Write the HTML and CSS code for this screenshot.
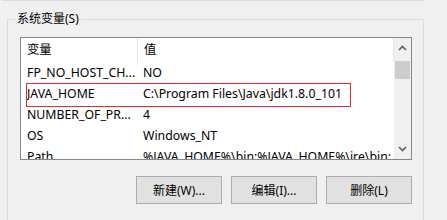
FILE: index.html
```html
<!DOCTYPE html>
<html lang="zh-CN">
<head>
    <meta charset="UTF-8">
    <title>系统变量</title>
    <link rel="stylesheet" href="styles.css">
</head>
<body>
    <div class="top-rule"></div>
    <div class="group">
        <span class="group-title">系统变量(S)</span>
        <div class="list">
            <div class="list-body">
                <div class="list-head">
                    <div class="col-name">变量</div>
                    <div class="col-value">值</div>
                </div>
                <div class="row">
                    <div class="col-name">FP_NO_HOST_CH...</div>
                    <div class="col-value">NO</div>
                </div>
                <div class="row">
                    <div class="col-name">JAVA_HOME</div>
                    <div class="col-value">C:\Program Files\Java\jdk1.8.0_101</div>
                </div>
                <div class="row">
                    <div class="col-name">NUMBER_OF_PR...</div>
                    <div class="col-value">4</div>
                </div>
                <div class="row">
                    <div class="col-name">OS</div>
                    <div class="col-value">Windows_NT</div>
                </div>
                <div class="row">
                    <div class="col-name">Path</div>
                    <div class="col-value">%JAVA_HOME%\bin;%JAVA_HOME%\jre\bin;</div>
                </div>
                <div class="highlight"></div>
            </div>
            <div class="scrollbar">
                <svg class="arrow" width="9" height="6" viewBox="0 0 9 6">
                    <path d="M1 5 L4.5 1.5 L8 5" fill="none" stroke="#606060" stroke-width="1.6"/>
                </svg>
                <div class="track">
                    <div class="thumb"></div>
                </div>
                <svg class="arrow" width="9" height="6" viewBox="0 0 9 6">
                    <path d="M1 1 L4.5 4.5 L8 1" fill="none" stroke="#606060" stroke-width="1.6"/>
                </svg>
            </div>
        </div>
        <div class="buttons">
            <button class="btn">新建(W)...</button>
            <button class="btn">编辑(I)...</button>
            <button class="btn">删除(L)</button>
        </div>
    </div>
</body>
</html>
```

FILE: styles.css
```css
body {
    margin: 0;
    width: 447px;
    height: 220px;
    overflow: hidden;
    background-color: #f0f0f0;
    font-family: "Noto Sans", "Noto Sans CJK SC", sans-serif;
    font-size: 12px;
    color: #000;
}
.top-rule {
    margin-left: 2px;
    width: 422px;
    height: 1px;
    background-color: #dcdcdc;
}
.group {
    position: relative;
    margin: 18px 0 0 7px;
    width: 415px;
    height: 200px;
    border: 1px solid #dcdcdc;
    border-bottom: none;
}
.group-title {
    position: absolute;
    left: 7px;
    top: -10px;
    padding: 0 2px;
    line-height: 18px;
    background-color: #f0f0f0;
}
.list {
    display: flex;
    margin: 17px 0 0 12px;
    width: 390px;
    height: 121px;
    border: 1px solid #828790;
    background-color: #fff;
    overflow: hidden;
    font-size: 12.3px;
}
.list-body {
    position: relative;
    flex: 1;
    overflow: hidden;
}
.list-head {
    display: flex;
    height: 24px;
    line-height: 24px;
    border-right: 1px solid #e5e5e5;
}
.list-head .col-name {
    border-right: 1px solid #e5e5e5;
}
.row {
    display: flex;
    height: 21px;
    line-height: 21px;
    white-space: nowrap;
}
.col-name {
    width: 110px;
    padding-left: 6px;
    flex-shrink: 0;
}
.col-value {
    padding-left: 6px;
    white-space: nowrap;
}
.highlight {
    position: absolute;
    left: 5px;
    top: 45px;
    width: 323px;
    height: 22px;
    border: 1px solid #e8282c;
}
.scrollbar {
    width: 17px;
    display: flex;
    flex-direction: column;
    align-items: center;
    background-color: #f0f0f0;
}
.arrow {
    margin: 7px 0;
}
.track {
    flex: 1;
    width: 100%;
}
.thumb {
    margin: 3px 1px 0 1px;
    height: 18px;
    background-color: #cdcdcd;
}
.buttons {
    display: flex;
    justify-content: flex-end;
    gap: 9px;
    margin: 16px 0 0 0;
    width: 404px;
}
.btn {
    width: 86px;
    height: 28px;
    padding: 0;
    font-family: "Noto Sans", "Noto Sans CJK SC", sans-serif;
    font-size: 12px;
    color: #000;
    background-color: #e1e1e1;
    border: 1px solid #adadad;
    border-radius: 0;
}
```
